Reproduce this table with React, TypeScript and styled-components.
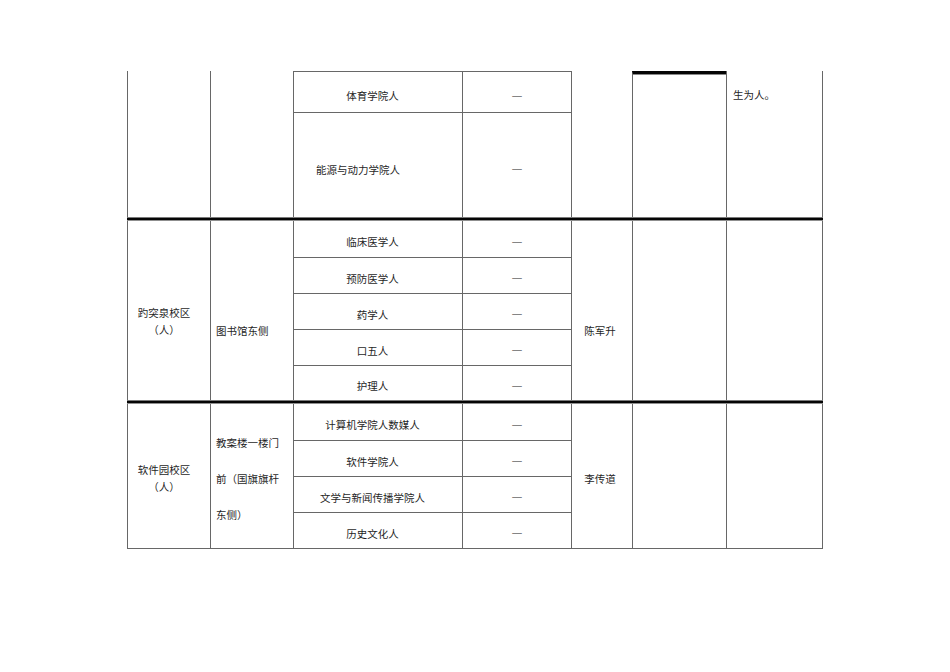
import styled, { createGlobalStyle } from "styled-components";

const GlobalStyle = createGlobalStyle`
  html, body {
    margin: 0;
    padding: 0;
    background: #fff;
  }
  body {
    font-family: "Noto Sans CJK SC", "Liberation Sans", sans-serif;
    color: #1f1f1f;
  }
`;

const LINE = "#676767";
const COLUMNS = "83px 83px 169px 109px 61px 94px 97px";

type Align = "left" | "center";

const Page = styled.div`
  padding: 71px 0 0 127px;
  width: 696px;
`;

const Section = styled.div<{ $rows: string; $closed?: boolean }>`
  display: grid;
  grid-template-columns: ${COLUMNS};
  grid-template-rows: ${(p) => p.$rows};
  border-bottom: ${(p) => (p.$closed ? `1px solid ${LINE}` : "none")};
`;

const Divider = styled.div`
  height: 2px;
  background: #050505;
  border-top: 1px solid #7a7a7a;
  border-bottom: 1px solid #8f8f8f;
`;

const Cell = styled.div<{
  $col: number;
  $row?: number;
  $span?: number;
  $align?: Align;
  $top?: boolean;
  $bottom?: boolean;
  $last?: boolean;
  $thick?: boolean;
  $pt?: number;
  $pr?: number;
  $pl?: number;
  $start?: boolean;
}>`
  box-sizing: border-box;
  grid-column: ${(p) => p.$col};
  grid-row: ${(p) => p.$row ?? 1} / span ${(p) => p.$span ?? 1};
  display: flex;
  flex-direction: column;
  align-items: ${(p) => (p.$align === "left" ? "flex-start" : "center")};
  justify-content: ${(p) => (p.$start ? "flex-start" : "center")};
  text-align: ${(p) => p.$align ?? "center"};
  border-left: 1px solid ${LINE};
  border-right: ${(p) => (p.$last ? `1px solid ${LINE}` : "none")};
  border-top: ${(p) =>
    p.$thick ? "3px solid #050505" : p.$top ? `1px solid ${LINE}` : "none"};
  box-shadow: ${(p) => (p.$thick ? "inset 0 1px 0 #8a8a8a" : "none")};
  border-bottom: ${(p) => (p.$bottom ? `1px solid ${LINE}` : "none")};
  padding: ${(p) => p.$pt ?? 0}px ${(p) => p.$pr ?? 0}px 0
    ${(p) => p.$pl ?? 0}px;
  font-size: 10.5px;
  line-height: 15px;
  white-space: nowrap;
`;

const Line = styled.span<{ $gap?: number }>`
  display: block;
  line-height: ${(p) => p.$gap ?? 17}px;
`;

const Dash = styled.span`
  font-family: "Liberation Sans", sans-serif;
  font-size: 9.5px;
  font-weight: bold;
  line-height: 10px;
  color: #858585;
`;

type Dept = { name: string; pr?: number };

function DeptRows({ items, pt }: { items: Dept[]; pt: number }) {
  return (
    <>
      {items.map((d, i) => {
        const bottom = i < items.length - 1;
        return [
          <Cell
            key={`n${i}`}
            $col={3}
            $row={i + 1}
            $bottom={bottom}
            $pt={pt}
            $pr={d.pr ?? 11}
          >
            {d.name}
          </Cell>,
          <Cell key={`d${i}`} $col={4} $row={i + 1} $bottom={bottom} $pt={pt}>
            <Dash>—</Dash>
          </Cell>,
        ];
      })}
    </>
  );
}

export default function App() {
  return (
    <>
      <GlobalStyle />
      <Page>
        <Section $rows="42px 104px">
          <Cell $col={1} $span={2} />
          <Cell $col={2} $span={2} />
          <Cell $col={3} $top $bottom $pt={7} $pr={11}>
            体育学院人
          </Cell>
          <Cell $col={4} $top $bottom $pt={7}>
            <Dash>—</Dash>
          </Cell>
          <Cell $col={5} $span={2} />
          <Cell $col={6} $span={2} $thick />
          <Cell $col={7} $span={2} $last $align="left" $start $pt={16} $pl={6}>
            生为人。
          </Cell>
          <Cell $col={3} $row={2} $pt={8} $pr={40}>
            能源与动力学院人
          </Cell>
          <Cell $col={4} $row={2} $pt={8}>
            <Dash>—</Dash>
          </Cell>
        </Section>
        <Divider />
        <Section $rows="37px 36px 36px 36px 34px">
          <Cell $col={1} $span={5} $pt={20} $pr={10}>
            <Line>趵突泉校区</Line>
            <Line>（人）</Line>
          </Cell>
          <Cell $col={2} $span={5} $align="left" $pt={40} $pl={5}>
            图书馆东侧
          </Cell>
          <Cell $col={5} $span={5} $pt={40} $pr={4}>
            陈军升
          </Cell>
          <Cell $col={6} $span={5} />
          <Cell $col={7} $span={5} $last />
          <DeptRows
            pt={5}
            items={[
              { name: "临床医学人" },
              { name: "预防医学人" },
              { name: "药学人" },
              { name: "口五人" },
              { name: "护理人" },
            ]}
          />
        </Section>
        <Divider />
        <Section $rows="37px 36px 36px 35px" $closed>
          <Cell $col={1} $span={4} $pt={3} $pr={10}>
            <Line>软件园校区</Line>
            <Line>（人）</Line>
          </Cell>
          <Cell $col={2} $span={4} $align="left" $pt={5} $pl={5}>
            <Line $gap={36}>教案楼一楼门</Line>
            <Line $gap={36}>前（国旗旗杆</Line>
            <Line $gap={36}>东侧）</Line>
          </Cell>
          <Cell $col={5} $span={4} $pt={5} $pr={4}>
            李传道
          </Cell>
          <Cell $col={6} $span={4} />
          <Cell $col={7} $span={4} $last />
          <DeptRows
            pt={5}
            items={[
              { name: "计算机学院人数媒人" },
              { name: "软件学院人" },
              { name: "文学与新闻传播学院人" },
              { name: "历史文化人" },
            ]}
          />
        </Section>
      </Page>
    </>
  );
}
